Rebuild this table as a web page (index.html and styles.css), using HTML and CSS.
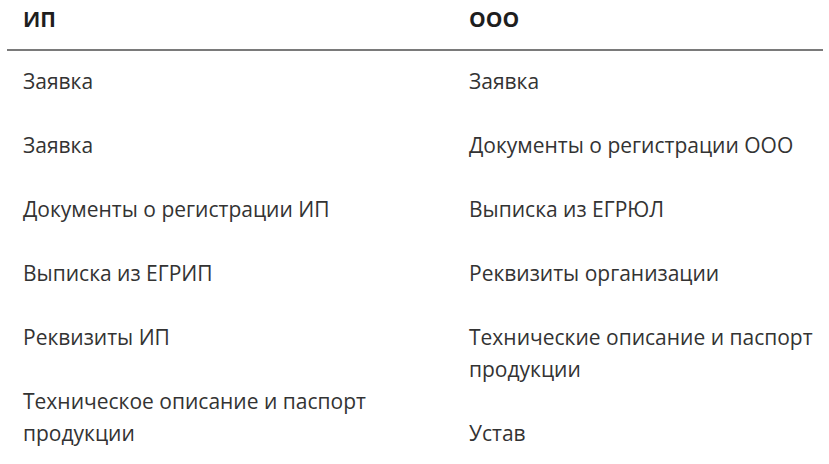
FILE: index.html
```html
<!DOCTYPE html>
<html lang="ru">
<head>
<meta charset="utf-8">
<link rel="stylesheet" href="styles.css">
</head>
<body>
<div class="table">
  <div class="head">
    <div class="th th-left">ИП</div>
    <div class="th th-right">ООО</div>
  </div>
  <div class="body">
    <ul class="col col-left">
      <li>Заявка</li>
      <li>Заявка</li>
      <li>Документы о регистрации ИП</li>
      <li>Выписка из ЕГРИП</li>
      <li>Реквизиты ИП</li>
      <li>Техническое описание и паспорт продукции</li>
    </ul>
    <ul class="col col-right">
      <li>Заявка</li>
      <li>Документы о регистрации ООО</li>
      <li>Выписка из ЕГРЮЛ</li>
      <li>Реквизиты организации</li>
      <li>Технические описание и паспорт продукции</li>
      <li>Устав</li>
    </ul>
  </div>
</div>
</body>
</html>
```
FILE: styles.css
```css
html, body {
  margin: 0;
  padding: 0;
  background: #ffffff;
}
body {
  font-family: "Open Sans", "Liberation Sans", sans-serif;
  color: #333333;
}
.table {
  margin: 0 6px 0 7px;
}
.head {
  display: grid;
  grid-template-columns: 446px 1fr;
  border-bottom: 2px solid #7a7a7a;
}
.th {
  font-weight: 700;
  font-size: 21px;
  line-height: 26px;
  color: #1e1e1e;
  padding: 6px 16px 17px 16px;
}
.body {
  display: grid;
  grid-template-columns: 446px 1fr;
}
.col {
  list-style: none;
  margin: 0;
  padding: 0;
}
.col li {
  font-size: 21px;
  line-height: 32px;
  padding: 14px 16px 18px 16px;
}
.col-left li {
  max-width: 370px;
}
.col-right li {
  padding-right: 0;
}
```
